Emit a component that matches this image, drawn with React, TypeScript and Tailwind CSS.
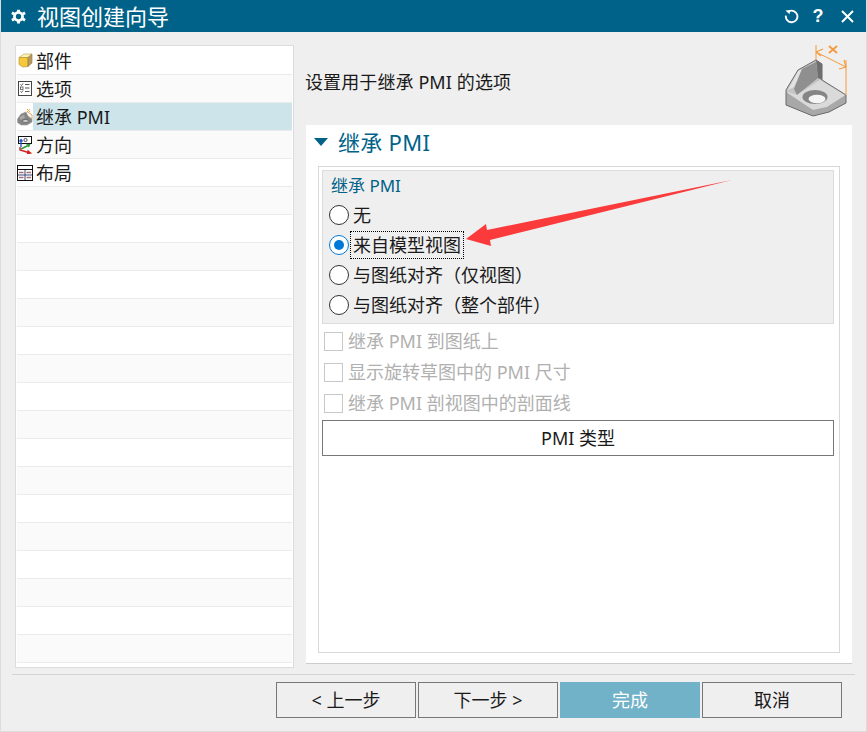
const font = "font-['Noto_Sans','Noto_Sans_CJK_SC',sans-serif]";

function PartIcon() {
  return (
    <svg width="15" height="15" viewBox="0 0 15 15">
      <path d="M1 4.5 L6 1 H14 L10 4.5 Z" fill="#fdf2b0" stroke="#b59a50" strokeWidth="0.6" />
      <path d="M1 4.5 H10 V13.5 L5 14 L1 11.5 Z" fill="#f6c93a" stroke="#b08c30" strokeWidth="0.6" />
      <path d="M10 4.5 L14 1 V10 L10 13.5 Z" fill="#b99a5a" stroke="#8c7a50" strokeWidth="0.6" />
    </svg>
  );
}

function OptionsIcon() {
  return (
    <svg width="16" height="17" viewBox="0 0 16 17" fill="none">
      <rect x="1.5" y="1.5" width="13" height="14" fill="#fff" stroke="#444" />
      <path d="M3.5 4.5 L4.5 5.5 L6 3.5 M3.5 11.5 L4.5 12.5 L6 10.5" stroke="#555" />
      <rect x="3.5" y="7" width="2.5" height="2.5" stroke="#555" strokeWidth="0.8" />
      <path d="M8 4.5 H12.5 M8 8 H12.5 M8 11.5 H12.5" stroke="#555" />
    </svg>
  );
}

function PmiIcon() {
  return (
    <svg width="16" height="18" viewBox="0 0 16 18" fill="none">
      <path d="M0.5 11 L4 6 L9 4 L11 8 L15 11 V14 L10 17 H4 L0.5 14.5 Z" fill="#858585" stroke="#9a9a9a" strokeWidth="0.6" />
      <path d="M3 9 L7 6.5 L8 10 L3 12 Z" fill="#a8a8a8" />
      <ellipse cx="8.5" cy="13" rx="3" ry="1.5" fill="#d0d0d0" stroke="#555" strokeWidth="0.7" />
      <path d="M10 3.5 L15 7 V11 M10 1 L13 4 M13 1 L10 4" stroke="#f59a3c" strokeWidth="0.9" />
    </svg>
  );
}

function DirectionIcon() {
  return (
    <svg width="16" height="18" viewBox="0 0 16 18" fill="none">
      <rect x="1.5" y="0.5" width="13" height="7" fill="#fff" stroke="#111" />
      <circle cx="8.5" cy="4" r="1.6" stroke="#222" strokeWidth="0.8" />
      <path d="M4 4 V11 M2.5 5.5 L4 3.5 L5.5 5.5" stroke="#2050d0" strokeWidth="1.3" />
      <path d="M4 13 L12 9 M9.5 8.5 L12.5 8.7 L11.5 11" stroke="#2f9a3a" strokeWidth="1.4" />
      <path d="M3 11 V14 L13 17 M10.5 14.5 L13.5 17 L10 17.5" stroke="#d02020" strokeWidth="1.4" />
    </svg>
  );
}

function LayoutIcon() {
  return (
    <svg width="16" height="16" viewBox="0 0 16 16" fill="none">
      <rect x="0.5" y="0.5" width="15" height="15" fill="#fff" stroke="#111" />
      <path d="M1 4.5 H15" stroke="#111" />
      <path d="M8 5 V15 M1 10 H15" stroke="#3a4a7a" />
      <path d="M2 12.5 H6.5 M9.5 12.5 H14 M2 7.5 H6.5 M9.5 7.5 H14" stroke="#a87070" strokeWidth="1.4" />
    </svg>
  );
}

// angle bracket picture at the top right of the wizard
function BracketPicture() {
  return (
    <svg width="62" height="72" viewBox="0 0 62 72" fill="none">
      <path d="M1 45 L13 25 L31 15 L37 19 V35 L61 50 V58 L44 67 L28 71 L1 60 Z" fill="#c4c4c4" />
      <path d="M3 45 L13 26 L17 24 L9 42 Z" fill="#e2e2e2" />
      <path d="M9 44 L17 24 L31 17 L33 33 L12 50 Z" fill="#8f8f8f" />
      <path d="M31 15 L37 19 V35 L33 33 Z" fill="#6f6f6f" />
      <path d="M3 47 L12 50 L35 35 L60 50 L42 62 L28 65 L3 55 Z" fill="#dadada" />
      <path d="M1 47 V60 L28 71 L44 67 L61 58 V50 L42 62 L28 65 Z" fill="#a8a8a8" />
      <ellipse cx="30" cy="52" rx="12.5" ry="7" fill="#858585" />
      <ellipse cx="32" cy="54" rx="8.5" ry="4.2" fill="#f5f5f5" />
      <path d="M1 45 L13 25 L31 15 L37 19 V35 L61 50 V58 L44 67 L28 71 L1 60 Z" stroke="#6a6a6a" strokeWidth="1" />
      <path d="M31 0 V15 M61 15 V50 M31 7 L61 22" stroke="#f59a3c" strokeWidth="1" />
      <path d="M31 7 L38 4 M31 7 L36 11 M61 22 L54 24 M61 22 L59 15" stroke="#f59a3c" strokeWidth="1.2" />
      <path d="M44 1 L52 8 M52 1 L44 8" stroke="#f59a3c" strokeWidth="1.8" />
    </svg>
  );
}

function Radio({ checked, label }: { checked?: boolean; label: string }) {
  return (
    <div className="flex items-center h-[30px] -ml-[2px]">
      <span className={`w-[20px] h-[20px] rounded-full border-[1.5px] flex items-center justify-center bg-white ${checked ? 'border-[#0078d7]' : 'border-[#333]'}`}>
        {checked && <span className="w-[10px] h-[10px] rounded-full bg-[#0078d7]" />}
      </span>
      <span className={`text-[18px] leading-[26px] text-[#1a1a1a] ${checked ? 'outline-1 outline-dotted outline-black ml-[2px] px-[2px]' : 'ml-[4px]'}`}>{label}</span>
    </div>
  );
}

function DisabledCheck({ label }: { label: string }) {
  return (
    <div className="flex items-center h-[31px]">
      <span className="w-[19px] h-[19px] border border-[#c8c8c8] bg-white" />
      <span className="ml-[5px] text-[18px] text-[#b0b0b0]">{label}</span>
    </div>
  );
}

const navItems = [
  { label: '部件', icon: <PartIcon /> },
  { label: '选项', icon: <OptionsIcon /> },
  { label: '继承 PMI', icon: <PmiIcon />, selected: true },
  { label: '方向', icon: <DirectionIcon /> },
  { label: '布局', icon: <LayoutIcon /> },
];

export default function App() {
  const rows = Array.from({ length: 22 }, (_, i) => navItems[i]);

  return (
    <div className={`${font} relative w-[867px] h-[732px] bg-[#efefef] flex flex-col overflow-hidden border-x border-b border-[#dcdcdc]`}>
      {/* title bar */}
      <div className="h-8 -mx-px shrink-0 bg-[#006288] text-white flex items-center">
        <svg className="ml-[11px]" width="15" height="15" viewBox="0 0 24 24" fill="none">
          <circle cx="12" cy="12" r="6.5" stroke="#fff" strokeWidth="4.5" />
          <path d="M12 1 V5 M12 19 V23 M1.5 6 L5 8 M19 16 L22.5 18 M1.5 18 L5 16 M19 8 L22.5 6" stroke="#fff" strokeWidth="4.5" />
        </svg>
        <span className="ml-[11px] text-[22px] leading-8">视图创建向导</span>
        <div className="ml-auto flex items-center">
          <svg width="15" height="15" viewBox="0 0 16 16" fill="none">
            <path d="M5 2.6 A6.2 6.2 0 1 1 2 7" stroke="#fff" strokeWidth="2" />
            <path d="M1.5 1.5 L6.5 1 L6 5.5 Z" fill="#fff" />
          </svg>
          <span className="ml-[13px] w-[12px] text-center text-[18px] leading-none font-bold font-['Liberation_Sans']">?</span>
          <svg className="ml-[17px] mr-[13px]" width="13" height="13" viewBox="0 0 13 13">
            <path d="M1 1 L12 12 M12 1 L1 12" stroke="#fff" strokeWidth="2" />
          </svg>
        </div>
      </div>

      <div className="flex-1 flex flex-col">
        <div className="h-[632px] flex pl-[14px] pt-[13px]">
          {/* step list */}
          <div className="w-[279px] h-[623px] border border-[#dcdcdc] p-px bg-white overflow-hidden shrink-0">
            {rows.map((item, i) => (
              <div key={i} className={`h-[28px] flex items-center border-b border-[#ebebeb] ${i % 2 === 0 ? 'bg-white' : 'bg-[#fafafa]'}`}>
                {item && (
                  <>
                    <span className="w-[16px] flex justify-center shrink-0">{item.icon}</span>
                    <span className={`flex-1 h-full pl-[3px] text-[18px] leading-[28px] text-[#1a1a1a] ${item.selected ? 'bg-[#cce4ea]' : ''}`}>{item.label}</span>
                  </>
                )}
              </div>
            ))}
          </div>

          <div className="ml-[12px] w-[546px] flex flex-col">
            <div className="h-[80px] flex items-center justify-between shrink-0">
              <span className="text-[18px] text-[#1a1a1a] mt-[-6px] -ml-[1px] tracking-[0.1px]">设置用于继承 PMI 的选项</span>
              <span className="mr-[5px] mt-[-9px]"><BracketPicture /></span>
            </div>

            {/* options panel */}
            <div className="h-[540px] bg-white border-b border-[#cccccc] flex flex-col px-[12px]">
              <div className="h-[41px] pb-[7px] flex items-center shrink-0 -ml-[4px]">
                <span className="w-0 h-0 border-x-[7px] border-x-transparent border-t-[8px] border-t-[#006288]" />
                <span className="ml-[10px] text-[22px] text-[#006288] tracking-[0.3px]">继承 PMI</span>
              </div>
              <div className="h-[487px] border border-[#d8d8d8] pl-[3px] pr-[5px] py-[3px]">
                <div className="h-[154px] bg-[#efefef] border border-[#dcdcdc] pl-[8px] pt-[2px]">
                  <div className="h-[27px] text-[17px] leading-[26px] text-[#006288]">继承 PMI</div>
                  <Radio label="无" />
                  <Radio checked label="来自模型视图" />
                  <Radio label="与图纸对齐（仅视图）" />
                  <Radio label="与图纸对齐（整个部件）" />
                </div>
                <div className="pl-[1px] pt-[2px] ml-[1px]">
                  <DisabledCheck label="继承 PMI 到图纸上" />
                  <DisabledCheck label="显示旋转草图中的 PMI 尺寸" />
                  <DisabledCheck label="继承 PMI 剖视图中的剖面线" />
                </div>
                <button className="mt-[1px] w-full h-[36px] border border-[#777] bg-white text-[18px] text-[#1a1a1a]">PMI 类型</button>
              </div>
            </div>
          </div>
        </div>

        {/* footer */}
        <div className="mx-[11px] mt-[10px] border-t border-[#d4d4d4] w-[843px] flex justify-end gap-[2px] pt-[7px] pr-[13px]">
          <button className="w-[140px] h-[36px] border border-[#777] text-[18px] text-[#1a1a1a]">&lt; 上一步</button>
          <button className="w-[140px] h-[36px] border border-[#777] text-[18px] text-[#1a1a1a]">下一步 &gt;</button>
          <button className="w-[140px] h-[36px] bg-[#72b2c8] text-[18px] text-white">完成</button>
          <button className="w-[140px] h-[36px] border border-[#777] text-[18px] text-[#1a1a1a]">取消</button>
        </div>
      </div>

      {/* red annotation arrow */}
      <svg className="absolute -left-px top-0 pointer-events-none" width="867" height="732">
        <path d="M466 239 L486 224 L487 230 L732 180 L490 240 L491 246 Z" fill="#fb3b3b" />
      </svg>
    </div>
  );
}
